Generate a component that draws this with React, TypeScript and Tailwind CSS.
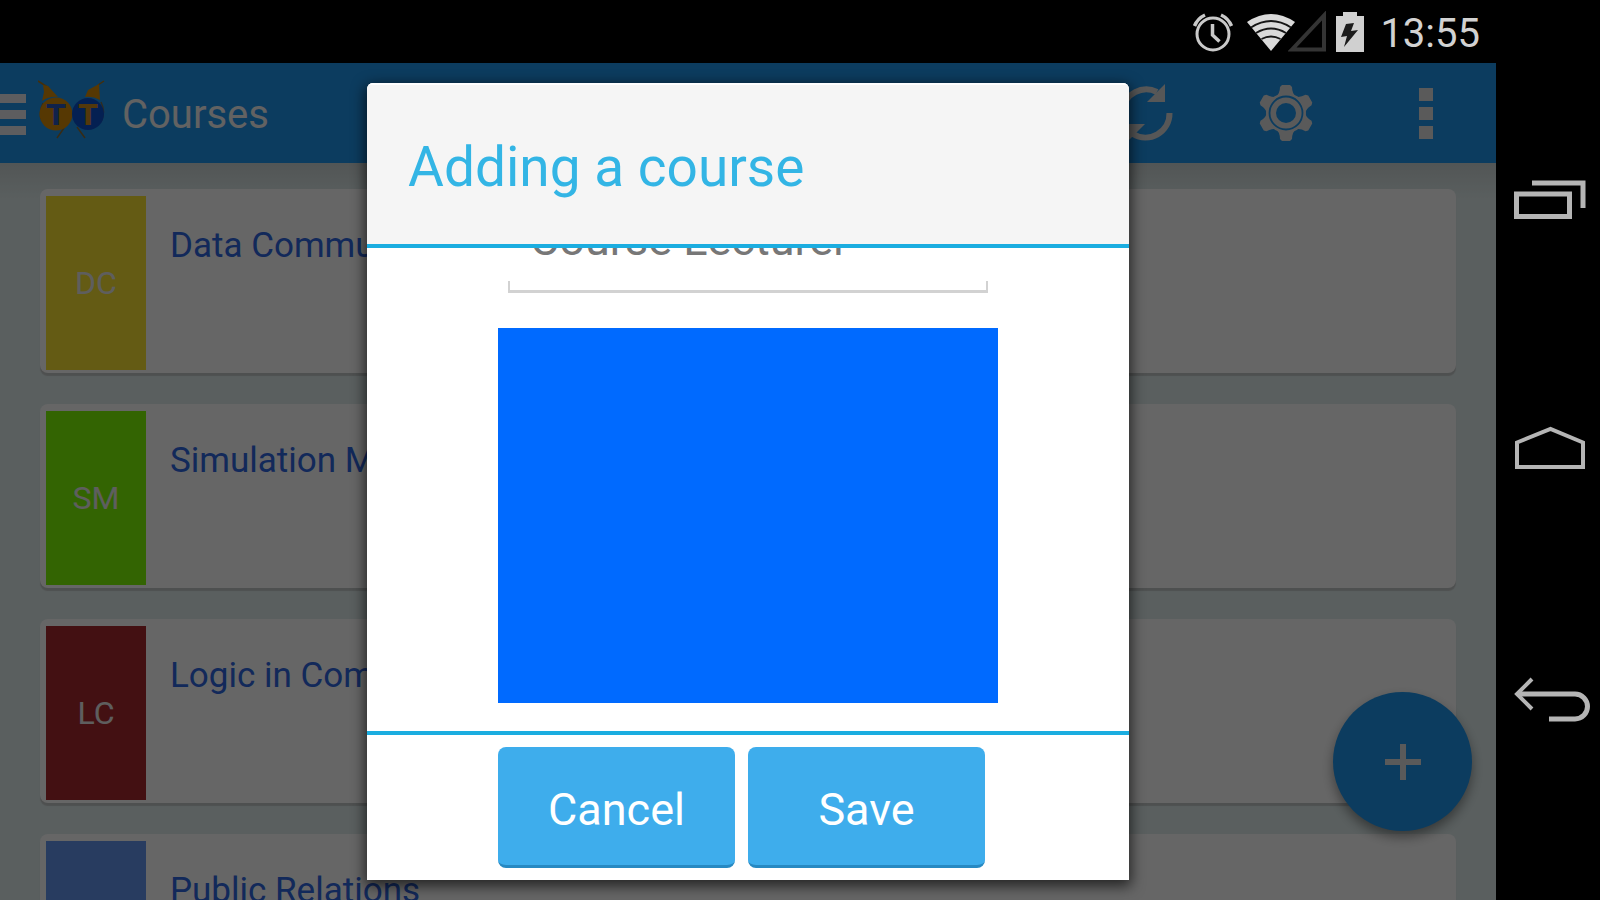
import type { ReactNode } from "react";

const courses = [
  { code: "DC", name: "Data Communications", tile: "bg-[#fbe332]" },
  { code: "SM", name: "Simulation Modelling", tile: "bg-[#7ffb05]" },
  { code: "LC", name: "Logic in Computer Science", tile: "bg-[#a8282d]" },
  { code: "PR", name: "Public Relations", tile: "bg-[#6496f0]" },
];

function AlarmIcon() {
  return (
    <svg width="42" height="40" viewBox="0 0 42 40" fill="none" stroke="#c9c9c9" aria-hidden="true">
      <circle cx="21" cy="22" r="16" strokeWidth="3" />
      <path d="M20.5 12v11l7 6.500" strokeWidth="3.500" />
      <path d="M2.500 14Q5.500 6.500 13 3M39.500 14Q36.500 6.500 29 3" strokeWidth="3.500" />
    </svg>
  );
}

function WifiIcon() {
  return (
    <svg width="50" height="38" viewBox="0 0 50 38" aria-hidden="true">
      <path d="M1 9Q25-7 49 9L25 38z" fill="#dadada" />
      <path d="M5 14.500Q25 1.500 45 14.500M10 20Q25 11 40 20M15.500 26Q25 21 34.500 26" fill="none" stroke="#161616" strokeWidth="1.800" />
    </svg>
  );
}

function SignalIcon() {
  return (
    <svg width="40" height="42" viewBox="0 0 40 42" aria-hidden="true">
      <path d="M4 38.500L36 4.500v34z" fill="none" stroke="#343434" strokeWidth="4" />
    </svg>
  );
}

function BatteryIcon() {
  return (
    <svg width="28" height="40" viewBox="0 0 28 40" aria-hidden="true">
      <path d="M7 0h14v4h7v36H0V4h7z" fill="#d0d0d0" />
      <path d="M10 12l8-1-3 8 7-1L8 35l3-11-6 1z" fill="#1b1b1b" />
    </svg>
  );
}

function LogoIcon() {
  return (
    <svg width="68" height="64" viewBox="0 0 68 64" aria-hidden="true">
      <path d="M26 49l-7 10M39 48l8 11" fill="none" stroke="#8a6c34" strokeWidth="1.500" />
      <path d="M0 2l11 7M66 2l-6 4" fill="none" stroke="#a8741a" strokeWidth="1.500" />
      <path d="M5 6l5 1 10 11q-8-1-16 4l2-9zM61 5l1 16q-7-4-15-3l3-7z" fill="#d88c08" />
      <path d="M5 24Q1 32 3 40M63 23Q68 33 63 43" fill="none" stroke="#7a6c50" strokeWidth="1.500" />
      <circle cx="18" cy="35" r="16.500" fill="#d88c08" />
      <circle cx="50" cy="35" r="16" fill="#0c52cc" />
      <text x="18" y="46" textAnchor="middle" fontFamily="DejaVu Sans, sans-serif" fontWeight="700" fontSize="28" fill="#2a55b8">T</text>
      <text x="50" y="46" textAnchor="middle" fontFamily="DejaVu Sans, sans-serif" fontWeight="700" fontSize="28" fill="#d08c1c">T</text>
    </svg>
  );
}

function RefreshIcon() {
  return (
    <svg width="60" height="60" viewBox="0 0 60 60" aria-hidden="true">
      <path d="M6.500 27A24 24 0 0 1 41 9M53.500 30A24 24 0 0 1 17 51" fill="none" stroke="#d9d9d9" strokeWidth="6" />
      <path d="M49 1v18H31zM11 59V41h18z" fill="#d9d9d9" />
    </svg>
  );
}

function GearIcon() {
  return (
    <svg width="56" height="58" viewBox="-28 -29 56 58" aria-hidden="true">
      <g fill="#e2e2e2">
        <circle r="20" />
        {[0, 60, 120, 180, 240, 300].map((angle) => (
          <path key={angle} d="M-11-15Q-6-19-6-26l2-2h8l2 2Q6-19 11-15z" transform={`rotate(${angle})`} />
        ))}
      </g>
      <circle r="16.500" fill="none" stroke="#1e96ee" strokeWidth="1.800" />
      <circle r="10" fill="#1e96ee" />
    </svg>
  );
}

function MoreIcon() {
  return (
    <svg width="16" height="54" viewBox="0 0 16 54" fill="#e2e2e2" aria-hidden="true">
      <path d="M1 2h14v13H1zM1 21h14v13H1zM1 40h14v13H1z" />
    </svg>
  );
}

function RecentsIcon() {
  return (
    <svg width="72" height="40" viewBox="0 0 72 40" fill="none" stroke="#b5b5b5" strokeWidth="5" aria-hidden="true">
      <path d="M2.500 14h53v22.500h-53z" />
      <path d="M18 3h51v25" />
    </svg>
  );
}

function HomeIcon() {
  return (
    <svg width="72" height="46" viewBox="0 0 72 46" fill="none" stroke="#b5b5b5" strokeWidth="4" aria-hidden="true">
      <path d="M3 17.500L36.500 4 69 17.500V42H3z" />
    </svg>
  );
}

function BackIcon() {
  return (
    <svg width="80" height="48" viewBox="0 0 80 48" fill="none" stroke="#b5b5b5" strokeWidth="5" aria-hidden="true">
      <path d="M7 18h58a12.500 12.500 0 0 1 0 25H39" />
      <path d="M22 3L7 18l15 15" strokeWidth="4" />
    </svg>
  );
}

function IconButton({ label, children }: { label: string; children: ReactNode }) {
  return (
    <button type="button" aria-label={label} className="flex h-full w-[140px] items-center justify-center">
      {children}
    </button>
  );
}

function StatusBar() {
  return (
    <header className="flex h-[63px] shrink-0 items-center justify-end bg-black pr-[120px]">
      <AlarmIcon />
      <div className="ml-3 flex items-center">
        <WifiIcon />
        <div className="-ml-2">
          <SignalIcon />
        </div>
      </div>
      <div className="mr-4 ml-2">
        <BatteryIcon />
      </div>
      <time className="pt-1 text-[40px] leading-[60px] text-[#d2d2d2]">13:55</time>
    </header>
  );
}

function AppBar() {
  return (
    <div className="flex h-[100px] shrink-0 items-center bg-[#1e96ee]">
      <button type="button" aria-label="Open menu" className="flex flex-col gap-[7px] pt-0.5">
        <span className="h-[9px] w-[26px] bg-[#e8e8ee]" />
        <span className="h-[9px] w-[26px] bg-[#e8e8ee]" />
        <span className="h-[9px] w-[26px] bg-[#e8e8ee]" />
      </button>
      <div className="ml-3 pb-1">
        <LogoIcon />
      </div>
      <h1 className="ml-4 pt-1 text-[40px] leading-[48px] text-[#f4f4f4]">Courses</h1>
      <nav className="ml-auto flex h-full" aria-label="Actions">
        <IconButton label="Refresh">
          <RefreshIcon />
        </IconButton>
        <IconButton label="Settings">
          <GearIcon />
        </IconButton>
        <IconButton label="More options">
          <MoreIcon />
        </IconButton>
      </nav>
    </div>
  );
}

function CourseList() {
  return (
    <div className="min-h-0 flex-1 overflow-hidden bg-[#e1eeee] bg-linear-to-b from-[#cdd6d6] to-[#e1eeee] to-5%">
      <ul className="flex flex-col gap-[31px] px-10 pt-[26px]">
        {courses.map((course) => (
          <li key={course.code} className="flex h-[184px] shrink-0 rounded-lg bg-white pt-[7px] pb-[3px] pl-[6px] shadow-[0_3px_1px_#c4c8c8]">
            <span className={`flex w-[100px] items-center justify-center text-[32px] leading-10 text-[#ececec] ${course.tile}`}>
              {course.code}
            </span>
            <h2 className="ml-6 pt-[30px] text-[35px] leading-10 text-[#2f66e2]">{course.name}</h2>
          </li>
        ))}
      </ul>
    </div>
  );
}

function AddCourseDialog() {
  return (
    <div className="absolute inset-0 flex justify-center bg-black/60 pt-5 pb-5">
      <form
        role="dialog"
        aria-labelledby="dialog-title"
        className="flex h-full w-[762px] flex-col overflow-hidden rounded-t-md bg-white shadow-[0_4px_14px_2px_rgba(0,0,0,0.65)]"
      >
        <div className="flex h-[165px] shrink-0 items-center border-t-2 border-b-4 border-t-white border-b-[#1bade0] bg-[#f5f5f5] pt-1 pl-[41px]">
          <h2 id="dialog-title" className="text-[55px] leading-[64px] text-[#33b5e5]">
            Adding a course
          </h2>
        </div>
        <div className="flex min-h-0 flex-1 flex-col items-center justify-end overflow-hidden pb-7">
          <div className="mb-[35px] flex w-[480px] shrink-0 flex-col">
            <input
              type="text"
              aria-label="Course Lecturer"
              placeholder="Course Lecturer"
              className="mb-3 h-[60px] w-full bg-transparent px-[22px] text-[45px] leading-[52px] text-[#666666] outline-none placeholder:text-[#777777]"
            />
            <div className="h-3 border-x-2 border-b-3 border-[#d2d2d2]" />
          </div>
          <button type="button" aria-label="Course color" className="h-[375px] w-[500px] shrink-0 bg-[#006aff]" />
        </div>
        <div className="flex h-[149px] shrink-0 justify-center border-t-4 border-[#1bade0] pt-3">
          <div className="flex w-[500px] gap-[13px]">
            <button type="button" className="h-[121px] w-[237px] rounded-lg border-b-3 border-[#2789c2] bg-[#3eadec] pt-2 text-[45px] leading-[52px] text-white">
              Cancel
            </button>
            <button type="submit" className="h-[121px] w-[237px] rounded-lg border-b-3 border-[#2789c2] bg-[#3eadec] pt-2 text-[45px] leading-[52px] text-white">
              Save
            </button>
          </div>
        </div>
      </form>
    </div>
  );
}

function SystemNav() {
  return (
    <nav aria-label="System" className="flex w-[104px] shrink-0 flex-col items-center justify-between bg-black pt-[117px] pb-[176px] pl-1">
      <button type="button" aria-label="Recent apps">
        <RecentsIcon />
      </button>
      <button type="button" aria-label="Home">
        <HomeIcon />
      </button>
      <button type="button" aria-label="Back">
        <BackIcon />
      </button>
    </nav>
  );
}

export default function App() {
  return (
    <div className="flex h-screen flex-col overflow-hidden bg-black font-[Roboto,sans-serif]">
      <StatusBar />
      <div className="flex min-h-0 flex-1">
        <main className="relative flex min-w-0 flex-1 flex-col overflow-hidden">
          <AppBar />
          <CourseList />
          <button
            type="button"
            aria-label="Add course"
            className="absolute right-6 bottom-[69px] flex size-[139px] items-center justify-center rounded-full bg-[#1e96ee] shadow-[0_6px_12px_rgba(0,0,0,0.4)]"
          >
            <svg width="36" height="36" viewBox="0 0 36 36" stroke="#e0e0e0" strokeWidth="6" aria-hidden="true">
              <path d="M18 0v36M0 18h36" />
            </svg>
          </button>
          <AddCourseDialog />
        </main>
        <SystemNav />
      </div>
    </div>
  );
}
